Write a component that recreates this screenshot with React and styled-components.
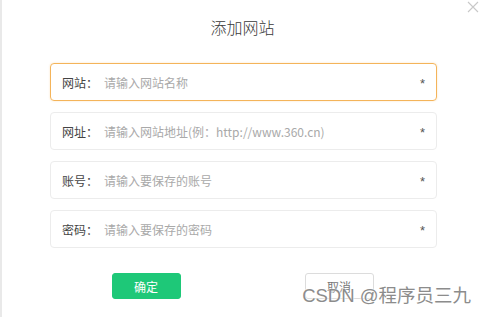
import React from "react";
import styled, { createGlobalStyle } from "styled-components";

const Global = createGlobalStyle`
  html, body {
    margin: 0;
    padding: 0;
    background: #fff;
  }
  * { box-sizing: border-box; }
`;

const Dialog = styled.div`
  position: relative;
  width: 485px;
  height: 317px;
  background: #fff;
  border-left: 2px solid #e9e9e9;
  font-family: "Noto Sans CJK SC", "Noto Sans", sans-serif;
  overflow: hidden;
`;

const Close = styled.button`
  position: absolute;
  top: 1px;
  right: 6px;
  width: 12px;
  height: 12px;
  padding: 0;
  border: none;
  background: none;
  display: flex;
`;

const Title = styled.h2`
  margin: 0;
  padding-top: 16px;
  height: 63px;
  text-align: center;
  font-size: 16px;
  line-height: 22px;
  font-weight: 300;
  color: #3a3a3a;
  padding-right: 2px;
`;

const Form = styled.div`
  display: flex;
  flex-direction: column;
  gap: 11px;
  padding: 0 48px;
`;

const Field = styled.label`
  display: flex;
  align-items: center;
  height: 38px;
  padding: 0 11px 0 11px;
  border: 1px solid ${(p) => (p.$active ? "#f4b45a" : "#ececec")};
  border-radius: 4px;
  box-shadow: ${(p) => (p.$active ? "0 0 2px rgba(244,180,90,0.4)" : "none")};
`;

const Label = styled.span`
  width: 42px;
  flex-shrink: 0;
  font-size: 12px;
  color: #444;
`;

const Input = styled.input`
  flex: 1;
  border: none;
  outline: none;
  padding: 0;
  font-family: "Noto Sans CJK SC", "Noto Sans", sans-serif;
  font-size: 12px;
  color: #333;
  background: transparent;
  &::placeholder {
    color: #a9a9a9;
  }
`;

const Star = styled.span`
  font-family: "Liberation Sans", sans-serif;
  font-size: 13px;
  color: #555;
  padding-top: 2px;
`;

const Actions = styled.div`
  display: flex;
  justify-content: center;
  gap: 124px;
  margin-top: 25px;
  padding-right: 2px;
`;

const Button = styled.button`
  width: 69px;
  height: 26px;
  border-radius: 3px;
  font-family: "Noto Sans CJK SC", "Noto Sans", sans-serif;
  font-size: 12px;
  padding: 0;
  border: 1px solid ${(p) => (p.$primary ? "#1ec878" : "#dcdcdc")};
  background: ${(p) => (p.$primary ? "#1ec878" : "#fff")};
  color: ${(p) => (p.$primary ? "#fff" : "#777")};
`;

const Watermark = styled.div`
  position: absolute;
  right: 14px;
  bottom: 11px;
  font-family: "Liberation Sans", "Noto Sans CJK SC", sans-serif;
  font-size: 18.5px;
  line-height: 20px;
  color: #8c8c8c;
  text-shadow: 0 0 2px #fff, 0 0 2px #fff;
  white-space: nowrap;
`;

const fields = [
  { label: "网站：", placeholder: "请输入网站名称", active: true },
  { label: "网址：", placeholder: "请输入网站地址(例：http://www.360.cn)" },
  { label: "账号：", placeholder: "请输入要保存的账号" },
  { label: "密码：", placeholder: "请输入要保存的密码" },
];

export default function App() {
  return (
    <>
      <Global />
      <Dialog>
        <Close aria-label="close">
          <svg width="12" height="12" viewBox="0 0 12 12">
            <path d="M1 1L11 11M11 1L1 11" stroke="#c8c8c8" strokeWidth="1.1" />
          </svg>
        </Close>
        <Title>添加网站</Title>
        <Form>
          {fields.map((f) => (
            <Field key={f.label} $active={f.active}>
              <Label>{f.label}</Label>
              <Input placeholder={f.placeholder} />
              <Star>*</Star>
            </Field>
          ))}
        </Form>
        <Actions>
          <Button $primary>确定</Button>
          <Button>取消</Button>
        </Actions>
        <Watermark>CSDN @程序员三九</Watermark>
      </Dialog>
    </>
  );
}
